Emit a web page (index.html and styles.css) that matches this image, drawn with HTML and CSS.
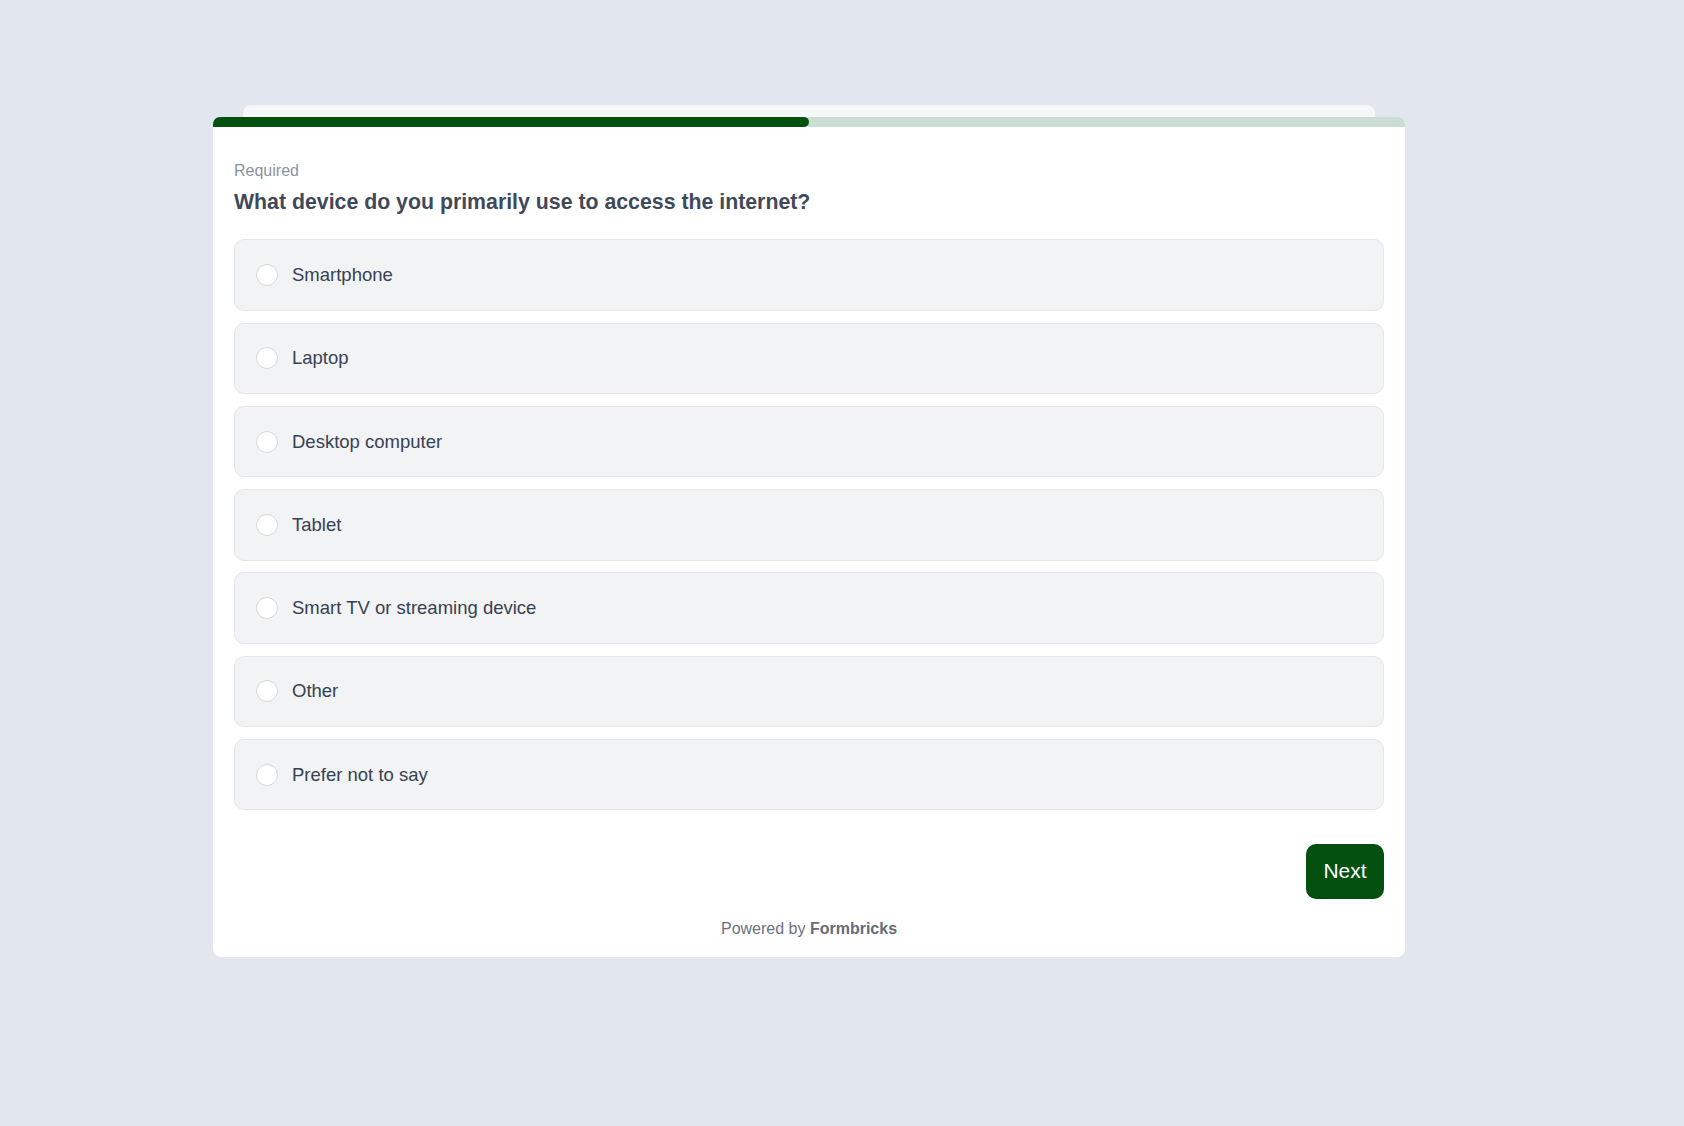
FILE: index.html
```html
<!DOCTYPE html>
<html lang="en">
<head>
<meta charset="utf-8">
<title>Survey</title>
<link rel="stylesheet" href="styles.css">
</head>
<body>
<div class="stage">
  <div class="peek"></div>
  <div class="card">
    <div class="progress"><div class="progress-fill" style="width:50%"></div></div>
    <div class="card-body">
      <div class="required">Required</div>
      <h1 class="question">What device do you primarily use to access the internet?</h1>
      <div class="options">
        <label class="option"><span class="radio"></span><span class="label">Smartphone</span></label>
        <label class="option"><span class="radio"></span><span class="label">Laptop</span></label>
        <label class="option"><span class="radio"></span><span class="label">Desktop computer</span></label>
        <label class="option"><span class="radio"></span><span class="label">Tablet</span></label>
        <label class="option"><span class="radio"></span><span class="label">Smart TV or streaming device</span></label>
        <label class="option"><span class="radio"></span><span class="label">Other</span></label>
        <label class="option"><span class="radio"></span><span class="label">Prefer not to say</span></label>
      </div>
      <div class="actions"><button class="next">Next</button></div>
      <div class="powered">Powered by <strong>Formbricks</strong></div>
    </div>
  </div>
</div>
</body>
</html>
```

FILE: styles.css
```css
* { box-sizing: border-box; }
html, body { margin: 0; padding: 0; }
body {
  background: #e2e6ef;
  font-family: "Liberation Sans", Arial, Helvetica, sans-serif;
  min-height: 1126px;
}
.stage {
  padding-top: 105px;
  margin-left: 213px;
  width: 1192px;
}
.peek {
  height: 12px;
  margin: 0 30px;
  background: #f6f7f9;
  border-radius: 8px 8px 0 0;
}
.card {
  background: #ffffff;
  border-radius: 7px 7px 8px 8px;
  overflow: hidden;
}
.progress {
  height: 10px;
  background: #cbdcd2;
}
.progress-fill {
  height: 100%;
  background: #03500f;
  border-radius: 0 5px 5px 0;
}
.card-body {
  padding: 31.5px 21px 16px;
}
.required {
  font-size: 16px;
  line-height: 24px;
  color: #8a939f;
}
.question {
  margin: 5px 0 0;
  font-size: 21.3px;
  line-height: 28px;
  font-weight: 700;
  color: #3f4959;
}
.options {
  margin-top: 23.7px;
  display: flex;
  flex-direction: column;
  gap: 11.93px;
}
.option {
  height: 71.4px;
  display: flex;
  align-items: center;
  padding-left: 21px;
  background: #f2f3f5;
  border: 1px solid #e3e6ea;
  border-radius: 10px;
}
.radio {
  width: 22px;
  height: 22px;
  border-radius: 50%;
  background: #ffffff;
  border: 1px solid #d2dbd6;
  flex: none;
}
.label {
  margin-left: 14px;
  font-size: 18.5px;
  color: #374151;
}
.actions {
  margin-top: 33.3px;
  display: flex;
  justify-content: flex-end;
}
.next {
  width: 78px;
  height: 55px;
  border: none;
  border-radius: 10px;
  background: #03500f;
  color: #ffffff;
  font-family: "Liberation Sans", Arial, Helvetica, sans-serif;
  font-size: 21px;
  padding: 0;
}
.powered {
  margin-top: 18.5px;
  text-align: center;
  font-size: 16px;
  line-height: 24px;
  color: #6b7280;
}
.powered strong {
  font-weight: 700;
  color: #646c78;
}
```
